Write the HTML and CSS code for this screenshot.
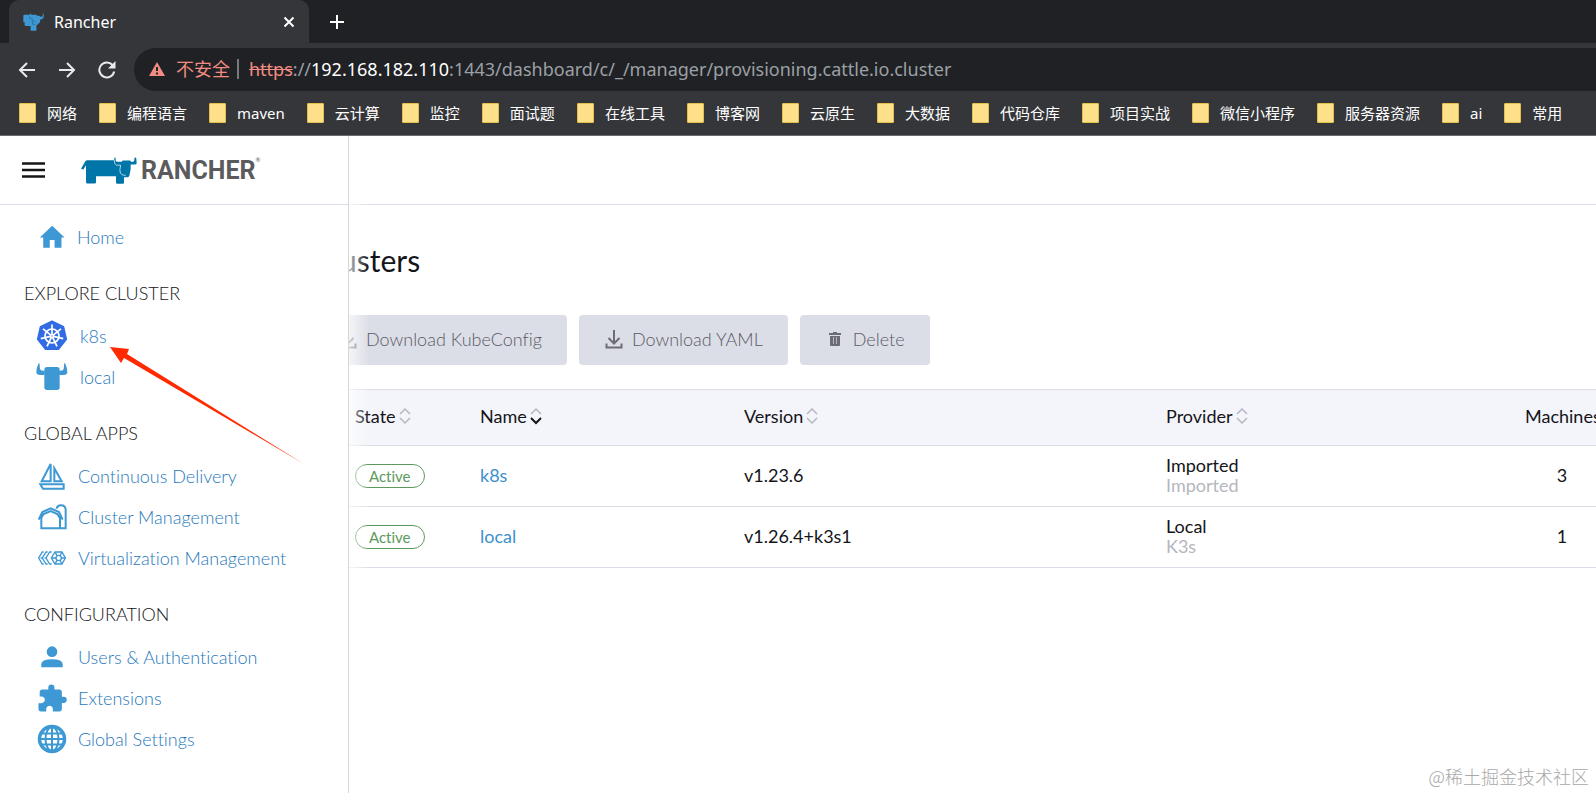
FILE: index.html
```html
<!DOCTYPE html>
<html lang="zh-CN">
<head>
<meta charset="utf-8">
<title>Rancher</title>
<link rel="stylesheet" href="styles.css">
</head>
<body>
<div class="browser">
  <div class="tabstrip">
    <div class="tab">
      <svg class="favicon" viewBox="70 36 64 54" aria-hidden="true"><path fill="#3d98d3" d="M71 44q0-3 3-3h17v-3h4v3h17v3h7l5 3 6-1V38h3v12l-7 5h-4v9l-6 5-4 4h-1v14q0 3-3 3H96q-3 0-3-3V75H79q-4 0-4-4v-7h-4z"/><path fill="none" stroke="#2a6a96" stroke-width="2" d="M90 44v8h8v8h10M99 60v10h10"/></svg>
      <span class="tab-title">Rancher</span>
      <button class="tab-close" aria-label="Close tab"><svg viewBox="0 0 12 12"><path d="M1.500 1.500l9 9M10.500 1.500l-9 9"/></svg></button>
    </div>
    <button class="tab-new" aria-label="New tab"><svg viewBox="0 0 16 16"><path d="M8 1v14M1 8h14"/></svg></button>
  </div>
  <div class="toolbar">
    <div class="tools">
      <button class="tool" aria-label="Back"><svg viewBox="0 0 18 18"><path d="M17 9H2M9 2L2 9l7 7"/></svg></button>
      <button class="tool" aria-label="Forward"><svg viewBox="0 0 18 18"><path d="M1 9h15M9 2l7 7-7 7"/></svg></button>
      <button class="tool" aria-label="Reload"><svg viewBox="0 0 18 18"><path d="M16.200 10.500A7.500 7.500 0 1 1 14.500 4"/><path fill="#e8eaed" stroke="none" d="M17.500 0v7.500H10z"/></svg></button>
    </div>
    <div class="omnibox">
      <svg class="warn" viewBox="0 0 16 14" aria-hidden="true"><path fill="#f28b82" d="M8 0l8 14H0z"/><path stroke="#202124" stroke-width="2" d="M8 5v4M8 10.500v2"/></svg>
      <span class="insecure">不安全</span>
      <span class="divider"></span>
      <div class="url" role="textbox" aria-label="Address"><s>https</s>://<b>192.168.182.110</b>:1443/dashboard/c/_/manager/provisioning.cattle.io.cluster</div>
    </div>
  </div>
  <nav class="bookmarks" aria-label="Bookmarks">
    <a href="#">网络</a><a href="#">编程语言</a><a href="#">maven</a><a href="#">云计算</a><a href="#">监控</a><a href="#">面试题</a><a href="#">在线工具</a><a href="#">博客网</a><a href="#">云原生</a><a href="#">大数据</a><a href="#">代码仓库</a><a href="#">项目实战</a><a href="#">微信小程序</a><a href="#">服务器资源</a><a href="#">ai</a><a href="#">常用</a>
  </nav>
</div>

<div class="app">
  <div class="page">
    <header class="page-header"></header>
    <main class="content">
      <h1>Clusters</h1>
      <div class="actions">
        <button class="btn" disabled><svg viewBox="0 0 20 20"><path d="M10 1v13M4.500 9l5.500 5.500L15.500 9M2.500 14.500v4h15v-4"/></svg>Download KubeConfig</button>
        <button class="btn" disabled><svg viewBox="0 0 20 20"><path d="M10 1v13M4.500 9l5.500 5.500L15.500 9M2.500 14.500v4h15v-4"/></svg>Download YAML</button>
        <button class="btn" disabled><svg viewBox="0 0 20 20"><path class="solid" d="M4 4h4V3h4v1h4v2H4zM5 7h10v9q0 1-1 1H6q-1 0-1-1z"/><path class="slit" d="M8.500 8v7M11.500 8v7"/></svg>Delete</button>
      </div>
      <table class="clusters">
        <colgroup><col class="c-check"><col class="c-state"><col class="c-name"><col class="c-version"><col class="c-provider"><col></colgroup>
        <thead>
          <tr>
            <th></th>
            <th><button class="sort">State<svg viewBox="0 0 12 18"><path d="M1 7l5-5 5 5M1 11l5 5 5-5"/></svg></button></th>
            <th><button class="sort">Name<svg viewBox="0 0 12 18"><path d="M1 7l5-5 5 5"/><path class="on" d="M1 11l5 5 5-5"/></svg></button></th>
            <th><button class="sort">Version<svg viewBox="0 0 12 18"><path d="M1 7l5-5 5 5M1 11l5 5 5-5"/></svg></button></th>
            <th><button class="sort">Provider<svg viewBox="0 0 12 18"><path d="M1 7l5-5 5 5M1 11l5 5 5-5"/></svg></button></th>
            <th><button class="sort">Machines</button></th>
          </tr>
        </thead>
        <tbody>
          <tr><td></td><td><span class="badge">Active</span></td><td><a href="#">k8s</a></td><td>v1.23.6</td><td>Imported<div class="sub">Imported</div></td><td><div class="count">3</div></td></tr>
          <tr><td></td><td><span class="badge">Active</span></td><td><a href="#">local</a></td><td>v1.26.4+k3s1</td><td>Local<div class="sub">K3s</div></td><td><div class="count">1</div></td></tr>
        </tbody>
      </table>
    </main>
  </div>

  <aside class="menu">
    <div class="menu-top">
      <button class="burger" aria-label="Menu"><svg viewBox="0 0 24 16"><path d="M0 1.500h23M0 8h23M0 14.500h23"/></svg></button>
      <div class="brand">
        <svg class="bull" viewBox="241 80 168 80" aria-hidden="true"><path fill="#0075a8" d="M241 115L254 92q2-3 6-3H341V83q0-2 2-2t2 2v7q0 4 5 4h13q2-4 5-4h19q3 0 4 4h7q3-1 3-8 0-5 3-5 3 0 3 4l1 13q0 4-5 4h-13v14l-4 20q-1 4-5 4h-11v17q0 3-3 3H350q-4 0-4-4V137H286v18q0 4-4 4H260q-4 0-4-4V104q-5 8-8 13z"/><path fill="none" stroke="#fff" stroke-width="2" d="M341 89l1 10 5 5h13q-4 14-1 24l8 6h8"/></svg>
        <span class="wordmark">RANCHER</span><span class="reg">®</span>
      </div>
    </div>
    <nav class="menu-body">
      <a class="item home" href="#"><svg viewBox="109 276 93 93"><path d="M156 290l36 34h-9v30h-20v-23h-14v23h-19v-30h-10z"/></svg>Home</a>
      <h2>EXPLORE CLUSTER</h2>
      <a class="item cluster" href="#"><svg viewBox="0 0 32 32"><path fill="#326ce5" stroke="#326ce5" stroke-width="2" stroke-linejoin="round" d="M16 1.500L27.300 7l2.800 12.200-7.800 9.900H9.700L1.900 19.200 4.700 7z"/><g fill="none" stroke="#fff" stroke-width="1.700"><circle cx="16" cy="16" r="7"/><circle cx="16" cy="16" r="1.500"/><path id="spoke" d="M16 14.500V4.500"/><use href="#spoke" transform="rotate(51.430 16 16)"/><use href="#spoke" transform="rotate(102.860 16 16)"/><use href="#spoke" transform="rotate(154.290 16 16)"/><use href="#spoke" transform="rotate(205.710 16 16)"/><use href="#spoke" transform="rotate(257.140 16 16)"/><use href="#spoke" transform="rotate(308.570 16 16)"/></g></svg>k8s</a>
      <a class="item cluster" href="#"><svg viewBox="110 306 96 96"><rect x="135" y="324" width="46" height="69" rx="8"/><path d="M118 312q3 0 3 5 0 14 4 17 3 2 11 1v13h-13q-12 0-12-9 0-12 7-27zM197 312q-3 0-3 5 0 14-4 17-3 2-11 1v13h13q12 0 12-9 0-12-7-27z"/></svg>local</a>
      <h2>GLOBAL APPS</h2>
      <a class="item line" href="#"><svg viewBox="109 2 96 96"><path d="M153 14v52h-27zM164 27v39h22zM122 75h70v13h-62z"/></svg>Continuous Delivery</a>
      <a class="item line" href="#"><svg viewBox="109 128 96 96"><path d="M117 184l11-23 25-11 25 11 11 23M125 178v32h73v-55q0-14-15-14-9 0-13 10M124 180l8-13 21-9 20 9 8 13M181 176v34"/></svg>Cluster Management</a>
      <a class="item line thin" href="#"><svg viewBox="109 251 96 96"><path d="M132 281h-4l-11 18 11 18h4M144 281h-5l-11 18 11 18h5M156 281h-6l-11 18 11 18h6M123 299h8M135 299h7M166 281h21l10 18-10 18h-21l-11-18z"/><circle cx="177" cy="299" r="8"/><path d="M166 281l6 11M187 281l-6 11M197 299h-12M187 317l-6-11M166 317l6-11M155 299h14"/></svg>Virtualization Management</a>
      <h2>CONFIGURATION</h2>
      <a class="item" href="#"><svg viewBox="109 158 96 96"><circle cx="157" cy="190" r="16"/><path d="M125 237v-9q0-15 32-15t32 15v9z"/></svg>Users &amp; Authentication</a>
      <a class="item" href="#"><svg viewBox="0 -1 26 26"><path d="M22.500 11H21V7c0-1.100-.9-2-2-2h-4V3.500a2.500 2.500 0 0 0-5 0V5H5c-1.100 0-2 .9-2 2v3.800h1.500c1.490 0 2.700 1.210 2.700 2.700s-1.210 2.700-2.700 2.700H2V21c0 1.100.9 2 2 2h4.300v-2c0-1.490 1.210-2.700 2.700-2.700s2.700 1.210 2.700 2.700v2H19c1.100 0 2-.9 2-2v-5h1.500a2.500 2.500 0 0 0 0-5z"/></svg>Extensions</a>
      <a class="item globe" href="#"><svg viewBox="0 0 32 32"><circle cx="16" cy="16" r="12.500" stroke-width="3.500"/><ellipse cx="16" cy="16" rx="6.500" ry="12"/><path d="M16 4v24M3 16h26M5 10.500h22M5 21.500h22"/></svg>Global Settings</a>
    </nav>
  </aside>

  <svg class="pointer" viewBox="0 0 196 118" aria-hidden="true"><path fill="#ff2a00" d="M0 0l19 2-2 5L194 117 14 11l-3 5z"/></svg>
  <div class="watermark">@稀土掘金技术社区</div>
</div>
</body>
</html>
```
FILE: styles.css
```css
* { box-sizing: border-box; }
html, body { height: 100%; margin: 0; }
body {
  display: flex;
  flex-direction: column;
  overflow: hidden;
  background: #fff;
  color: #141419;
  font: 18px/20px Lato, "Noto Sans CJK SC", sans-serif;
  font-variant-ligatures: none;
}
button { padding: 0; border: 0; background: none; font: inherit; color: inherit; }
a { color: #3d8fcb; text-decoration: none; }
svg { display: block; flex: none; }

/* Browser frame */
.browser {
  background: #35363a;
  border-bottom: 1px solid #6b6b6d;
  color: #fff;
  font-family: "Noto Sans", "Noto Sans CJK SC", sans-serif;
}
.tabstrip { display: flex; align-items: center; height: 43px; padding-left: 9px; background: #202124; }
.tab {
  display: flex;
  align-items: center;
  width: 300px;
  height: 43px;
  padding: 0 14px;
  border-radius: 10px 10px 0 0;
  background: #35363a;
  font-size: 16px;
}
.favicon { width: 21px; height: 18px; }
.tab-title { flex: 1; margin-left: 10px; }
.tab-close svg { width: 12px; height: 12px; fill: none; stroke: #fff; stroke-width: 2; }
.tab-new { margin-left: 20px; }
.tab-new svg { width: 16px; height: 16px; fill: none; stroke: #fff; stroke-width: 2; }
.toolbar { display: flex; align-items: center; gap: 18px; padding: 5px 0 0 18px; }
.tools { display: flex; gap: 22px; }
.tool svg { width: 18px; height: 18px; fill: none; stroke: #e8eaed; stroke-width: 2; }
.omnibox {
  display: flex;
  align-items: center;
  flex: 1;
  height: 43px;
  padding: 0 0 1px 15px;
  border-radius: 22px 0 0 22px;
  background: #202124;
  font-size: 18px;
}
.warn { width: 16px; height: 14px; fill: none; }
.insecure { margin-left: 11px; color: #f28b82; }
.divider { width: 2px; height: 20px; margin: 0 10px 0 7px; background: #77797c; }
.url { color: #9aa0a6; white-space: nowrap; }
.url s { color: #f28b82; }
.url b { color: #fff; font-weight: 400; }
.bookmarks { display: flex; gap: 22px; height: 44px; padding-left: 19px; align-items: center; font-size: 15px; white-space: nowrap; overflow: hidden; }
.bookmarks a { display: flex; align-items: center; gap: 11px; color: #fff; }
.bookmarks a::before {
  content: "";
  width: 15px;
  height: 18px;
  border: 1px solid #e3bf4b;
  border-radius: 1px;
  background: #ffe08a;
}

/* Page under the menu */
.app { position: relative; flex: 1; overflow: hidden; }
.page-header { height: 69px; border-bottom: 1px solid #dcdee7; }
.content { padding: 37px 0 0 313px; }
h1 { margin: 0 0 37px; font-size: 30px; line-height: 36px; font-weight: 400; }
.actions { display: flex; gap: 12px; margin-bottom: 24px; }
.btn {
  display: flex;
  align-items: center;
  gap: 8px;
  height: 50px;
  padding: 0 25px 2px;
  border-radius: 4px;
  background: #dcdee7;
  color: #5a5a64;
  font-weight: 300;
  white-space: nowrap;
}
.btn svg { width: 20px; height: 20px; fill: none; stroke: #6c6c76; stroke-width: 2; }
.btn .solid { fill: #6c6c76; stroke: none; }
.btn .slit { stroke: #b5b6be; stroke-width: 1; }
.clusters { width: 100%; min-width: 1340px; table-layout: fixed; border-collapse: collapse; }
.c-check { width: 42px; }
.c-state { width: 125px; }
.c-name { width: 264px; }
.c-version { width: 422px; }
.c-provider { width: 359px; }
.clusters th { height: 56px; padding: 0 0 3px; background: #f4f5fa; text-align: left; font-weight: 400; }
.clusters td { height: 61px; padding: 0 0 2px; }
.clusters tr { border-bottom: 1px solid #dcdee7; }
.clusters thead tr { border-top: 1px solid #dcdee7; }
.sort { display: flex; align-items: center; gap: 3px; }
.sort svg { width: 12px; height: 18px; fill: none; stroke: #b6b6c2; stroke-width: 1.5; }
.sort .on { stroke: #141419; stroke-width: 2; }
.badge {
  display: block;
  width: fit-content;
  margin-top: 1px;
  padding: 1px 13px;
  border: 1px solid #5d995d;
  border-radius: 12px;
  color: #5d995d;
  font-size: 15px;
}
.sub { color: #b6b6be; }
.count { width: 74px; text-align: center; }

/* Slide-in menu */
.menu {
  position: absolute;
  inset: 0 auto 0 0;
  width: 349px;
  border-right: 1px solid #d5d6da;
  background: #fff;
}
.menu::after {
  content: "";
  position: absolute;
  top: 0;
  bottom: 0;
  left: 100%;
  width: 20px;
  margin-left: 1px;
  background: linear-gradient(90deg, rgba(255, 255, 255, .7), rgba(255, 255, 255, 0));
}
.menu-top { display: flex; align-items: center; height: 69px; padding-left: 22px; border-bottom: 1px solid #dcdee7; }
.burger svg { width: 24px; height: 16px; fill: none; stroke: #141419; stroke-width: 2.5; }
.brand { display: flex; align-items: center; margin-left: 35px; }
.bull { width: 56px; height: 27px; }
.wordmark { margin-left: 4px; padding-top: 2px; color: #5b5b5e; font: 700 25px/28px Roboto, sans-serif; }
.reg { align-self: flex-start; color: #5b5b5e; font-size: 6px; line-height: 10px; }
.menu-body { padding-top: 11px; font-weight: 300; }
.menu-body h2 { margin: 20px 0 6px 24px; font-size: 18px; line-height: 32px; font-weight: 300; color: #141419; }
.item { display: flex; align-items: center; gap: 10px; height: 41px; padding-left: 36px; color: #1f78bd; }
.item svg { width: 32px; height: 32px; fill: #3d98d3; }
.item.home { gap: 9px; }
.item.cluster { gap: 12px; }
.line svg, .globe svg { fill: none; stroke: #3d98d3; stroke-width: 6; }
.thin svg { stroke-width: 4; }
.globe svg { stroke-width: 2; }

.pointer { position: absolute; left: 110px; top: 211px; width: 196px; height: 118px; }
.watermark { position: absolute; right: 7px; bottom: 5px; color: #a8a8a8; font: 300 18px/24px "Noto Sans CJK SC", sans-serif; }
```
